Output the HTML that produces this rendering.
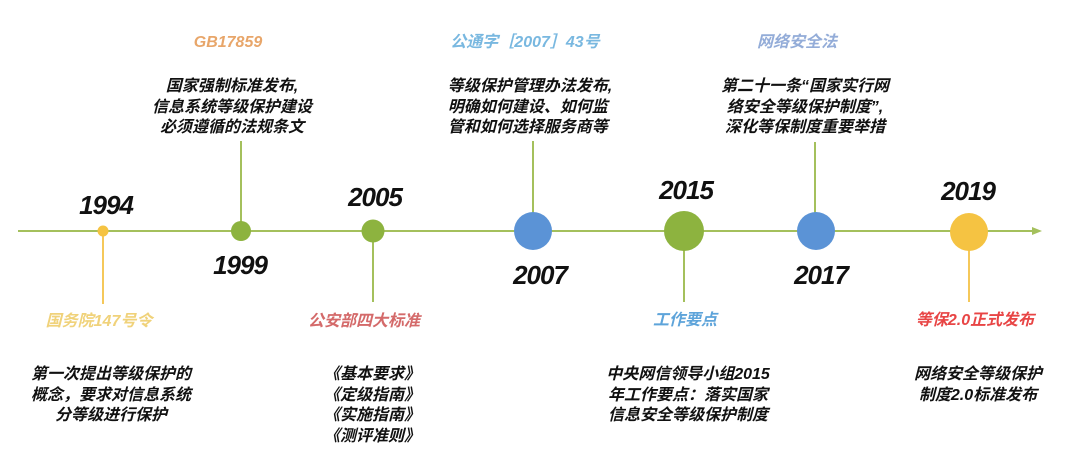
<!DOCTYPE html>
<html><head><meta charset="utf-8"><style>
body{margin:0;width:1080px;height:463px;background:#fff;position:relative;overflow:hidden;font-family:"Liberation Sans","Noto Sans CJK SC",sans-serif;}
.t{position:absolute;font-weight:bold;font-style:italic;white-space:nowrap;text-align:center;transform:translateX(-50%);}
.y{font-size:26px;color:#111;letter-spacing:-1px;line-height:30px;}
.l{font-size:16px;line-height:20px;}
.b{font-size:16px;line-height:20.5px;color:#111;}
</style></head><body>
<svg width="1080" height="463" style="position:absolute;left:0;top:0">
<line x1="18" y1="231" x2="1034" y2="231" stroke="#a4c05c" stroke-width="2"/>
<polygon points="1032,227 1042,231 1032,235" fill="#a4c05c"/>
<line x1="103" y1="231" x2="103" y2="304" stroke="#f5c85a" stroke-width="2"/>
<line x1="241" y1="141" x2="241" y2="231" stroke="#a4c05c" stroke-width="2"/>
<line x1="373" y1="231" x2="373" y2="302" stroke="#a4c05c" stroke-width="2"/>
<line x1="533" y1="141" x2="533" y2="231" stroke="#a4c05c" stroke-width="2"/>
<line x1="684" y1="231" x2="684" y2="302" stroke="#a4c05c" stroke-width="2"/>
<line x1="815" y1="142" x2="815" y2="231" stroke="#a4c05c" stroke-width="2"/>
<line x1="969" y1="231" x2="969" y2="302" stroke="#f5c85a" stroke-width="2"/>
<circle cx="103" cy="231" r="5.5" fill="#f5c342"/>
<circle cx="241" cy="231" r="10" fill="#8db33f"/>
<circle cx="373" cy="231" r="11.5" fill="#8db33f"/>
<circle cx="533" cy="231" r="19" fill="#5b93d6"/>
<circle cx="684" cy="231" r="20" fill="#8db33f"/>
<circle cx="816" cy="231" r="19" fill="#5b93d6"/>
<circle cx="969" cy="232" r="19" fill="#f5c342"/>
</svg>
<div class="t y" style="left:106px;top:190px">1994</div>
<div class="t y" style="left:240px;top:250px">1999</div>
<div class="t y" style="left:375px;top:182px">2005</div>
<div class="t y" style="left:540px;top:260px">2007</div>
<div class="t y" style="left:686px;top:175px">2015</div>
<div class="t y" style="left:821px;top:260px">2017</div>
<div class="t y" style="left:968px;top:176px">2019</div>

<div class="t l" style="left:228px;top:33px;color:#e8a66a">GB17859</div>
<div class="t l" style="left:525px;top:33px;color:#79b8e0">公通字［2007］43号</div>
<div class="t l" style="left:797px;top:33px;color:#93acd8">网络安全法</div>

<div class="t b" style="left:232px;top:77px">国家强制标准发布,<br>信息系统等级保护建设<br>必须遵循的法规条文</div>
<div class="t b" style="left:530px;top:77px;text-align:left">等级保护管理办法发布,<br>明确如何建设、如何监<br>管和如何选择服务商等</div>
<div class="t b" style="left:805px;top:77px">第二十一条“国家实行网<br>络安全等级保护制度”,<br>深化等保制度重要举措</div>

<div class="t l" style="left:99px;top:312px;color:#f0d27a">国务院147号令</div>
<div class="t l" style="left:364px;top:312px;color:#d46a6a">公安部四大标准</div>
<div class="t l" style="left:685px;top:311px;color:#5ea4da">工作要点</div>
<div class="t l" style="left:975px;top:311px;color:#e84545">等保2.0正式发布</div>

<div class="t b" style="left:111px;top:365px">第一次提出等级保护的<br>概念，要求对信息系统<br>分等级进行保护</div>
<div class="t b" style="left:372px;top:365px">《基本要求》<br>《定级指南》<br>《实施指南》<br>《测评准则》</div>
<div class="t b" style="left:688px;top:365px">中央网信领导小组2015<br>年工作要点：落实国家<br>信息安全等级保护制度</div>
<div class="t b" style="left:978px;top:365px">网络安全等级保护<br>制度2.0标准发布</div>
</body></html>
